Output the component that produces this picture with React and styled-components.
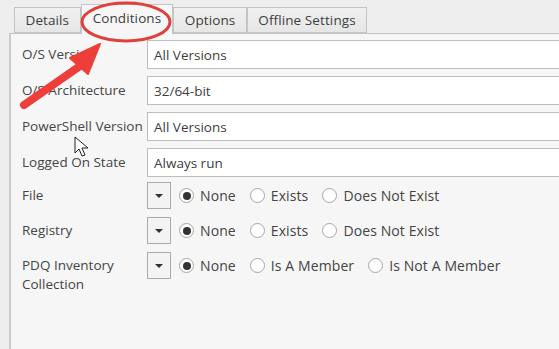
import styled, { createGlobalStyle } from "styled-components";

const GlobalStyle = createGlobalStyle`
  * {
    margin: 0;
    padding: 0;
    box-sizing: border-box;
  }

  html, body {
    width: 100%;
    height: 100%;
    overflow: hidden;
    background: #eeeeee;
    font-family: "Open Sans", "Noto Sans", sans-serif;
  }
`;

const Window = styled.div`
  position: relative;
  width: 559px;
  height: 349px;
  overflow: hidden;
  background: #eeeeee;
  display: flex;
  flex-direction: column;
`;

const TabStrip = styled.div`
  display: flex;
  align-items: flex-end;
  height: 33px;
  padding-left: 14px;
`;

const Tab = styled.div`
  position: relative;
  height: ${p => (p.$active ? "30px" : "26px")};
  margin-bottom: ${p => (p.$active ? "-1px" : "0")};
  padding: 0 ${p => (p.$active ? "11px" : "10.5px")};
  padding-bottom: ${p => (p.$active ? "3px" : "0")};
  display: flex;
  align-items: center;
  border: 1px solid #c4c4c4;
  border-bottom: ${p => (p.$active ? "none" : "1px solid #c4c4c4")};
  background: ${p => (p.$active ? "#f6f6f6" : "linear-gradient(#f0f0f0, #e6e6e6)")};
  z-index: ${p => (p.$active ? 2 : 1)};
  font-size: 13.5px;
  letter-spacing: 0.1px;
  color: #3d3d3d;
`;

const Panel = styled.div`
  flex: 1;
  margin-left: 9px;
  border-top: 1px solid #c4c4c4;
  border-left: 2px solid #cbcbcb;
  background: #f6f6f6;
  padding: 6px 0 0 11px;
  display: flex;
  flex-direction: column;
  gap: 5px;
`;

const Group = styled.div`
  display: flex;
  flex-direction: column;
  gap: ${p => p.$gap}px;
`;

const Row = styled.div`
  display: grid;
  grid-template-columns: 125px 1fr;
  align-items: ${p => (p.$top ? "start" : "center")};
`;

const Label = styled.div`
  font-size: 13.5px;
  line-height: 19px;
  color: #454545;
  white-space: ${p => (p.$wrap ? "normal" : "nowrap")};
  padding-top: ${p => (p.$top ? "4px" : "0")};
  width: ${p => (p.$wrap ? "105px" : "auto")};
`;

const Field = styled.div`
  height: 29px;
  background: #ffffff;
  border: 1px solid #bdbdbd;
  border-right: none;
  display: flex;
  align-items: center;
  padding-left: 6px;
  font-size: 13.5px;
  color: #3d3d3d;
`;

const Options = styled.div`
  display: flex;
  align-items: center;
  height: 27px;
`;

const DropButton = styled.div`
  width: 24px;
  height: 27px;
  border: 1px solid #aaaaaa;
  background: #f3f3f3;
  display: flex;
  align-items: center;
  justify-content: center;
  margin-right: 8px;
  &::after {
    content: "";
    border-left: 4px solid transparent;
    border-right: 4px solid transparent;
    border-top: 4px solid #333333;
  }
`;

const Choice = styled.label`
  display: flex;
  align-items: center;
  gap: 6px;
  margin-right: 14px;
  font-size: 14px;
  letter-spacing: 0.1px;
  color: #444444;
`;

const Radio = styled.span`
  width: 15px;
  height: 15px;
  border-radius: 50%;
  border: 1px solid #a6a6a6;
  background: #ffffff;
  display: flex;
  align-items: center;
  justify-content: center;
  &::after {
    content: "";
    width: 8px;
    height: 8px;
    border-radius: 50%;
    background: ${p => (p.$checked ? "#333333" : "transparent")};
  }
`;

const Overlay = styled.svg`
  position: absolute;
  left: 0;
  top: 0;
  pointer-events: none;
  z-index: 5;
`;

const RadioGroup = ({ items }) => (
  <Options>
    <DropButton />
    {items.map((item, i) => (
      <Choice key={item}>
        <Radio $checked={i === 0} />
        {item}
      </Choice>
    ))}
  </Options>
);

export default function App() {
  const tabs = ["Details", "Conditions", "Options", "Offline Settings"];

  return (
    <>
      <GlobalStyle />
      <Window>
        <TabStrip>
          {tabs.map(t => (
            <Tab key={t} $active={t === "Conditions"}>{t}</Tab>
          ))}
        </TabStrip>

        <Panel>
          <Group $gap={7}>
            <Row>
              <Label>O/S Version</Label>
              <Field>All Versions</Field>
            </Row>
            <Row>
              <Label>O/S Architecture</Label>
              <Field>32/64-bit</Field>
            </Row>
            <Row>
              <Label>PowerShell Version</Label>
              <Field>All Versions</Field>
            </Row>
            <Row>
              <Label>Logged On State</Label>
              <Field>Always run</Field>
            </Row>
          </Group>
          <Group $gap={8}>
            <Row>
              <Label>File</Label>
              <RadioGroup items={["None", "Exists", "Does Not Exist"]} />
            </Row>
            <Row>
              <Label>Registry</Label>
              <RadioGroup items={["None", "Exists", "Does Not Exist"]} />
            </Row>
            <Row $top>
              <Label $top $wrap>PDQ Inventory Collection</Label>
              <RadioGroup items={["None", "Is A Member", "Is Not A Member"]} />
            </Row>
          </Group>
        </Panel>

        <Overlay width="559" height="349" viewBox="0 0 559 349">
          <ellipse cx="126" cy="22" rx="44" ry="19" fill="none" stroke="#e0403c" strokeWidth="3" />
          <line x1="24" y1="105" x2="80" y2="66" stroke="#ee3e3a" strokeWidth="8" strokeLinecap="round" />
          <polygon points="100,44 70,58 88,74" fill="#ee3e3a" stroke="#ee3e3a" strokeWidth="2" strokeLinejoin="round" />
          <path
            d="M75 137 L75 153 L79 149 L82 156 L85 155 L82 148 L88 148 Z"
            fill="#ffffff"
            stroke="#222222"
            strokeWidth="1"
            strokeLinejoin="round"
          />
        </Overlay>
      </Window>
    </>
  );
}
